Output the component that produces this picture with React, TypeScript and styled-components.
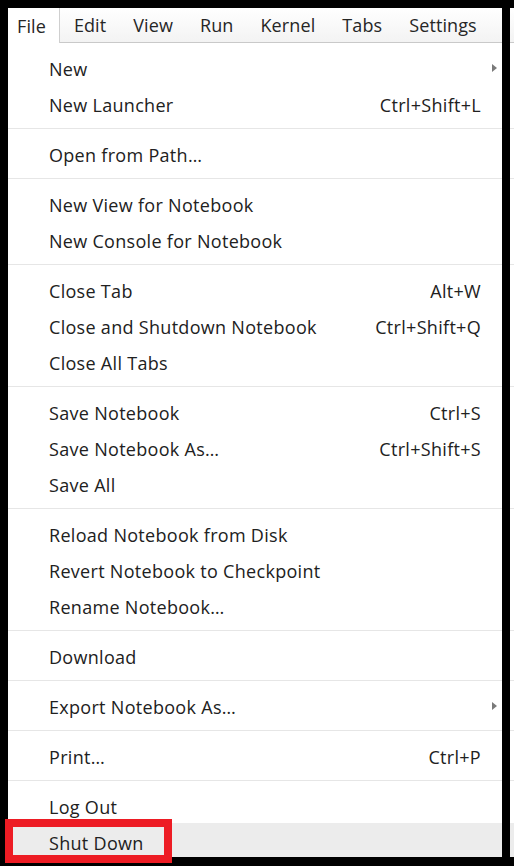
import styled, { createGlobalStyle } from 'styled-components';

const GlobalStyle = createGlobalStyle`
  html, body {
    margin: 0;
    padding: 0;
    background: #000;
  }
  * {
    box-sizing: border-box;
  }
`;

const Screen = styled.div`
  position: relative;
  width: 514px;
  height: 866px;
  background: #000;
  overflow: hidden;
  font-family: 'Open Sans', 'Noto Sans', sans-serif;
  color: #212121;
`;

const AppWindow = styled.div`
  margin: 8px 0 0 8px;
  width: 506px;
  height: 849px;
  background: #fff;
  overflow: hidden;
  display: flex;
  flex-direction: column;
`;

const MenuBar = styled.div`
  height: 35px;
  flex-shrink: 0;
  display: flex;
  align-items: stretch;
  background: linear-gradient(#ffffff, #f3f3f3);
  border-bottom: 1px solid #c9c9c9;
  box-shadow: 0 1px 2px rgba(0, 0, 0, 0.08);
`;

const BarItem = styled.div<{ $active?: boolean }>`
  display: flex;
  align-items: center;
  padding: 0 13.5px;
  font-size: 18px;
  letter-spacing: 0.1px;
  color: #262626;
  background: ${(p) => (p.$active ? '#fff' : 'transparent')};
  border-right: ${(p) => (p.$active ? '1px solid #cfcfcf' : 'none')};
  margin-bottom: ${(p) => (p.$active ? '-1px' : '0')};

  &:first-child {
    padding-left: 9px;
  }
`;

const Dropdown = styled.div`
  flex: 1;
  padding-top: 6px;
  background: #fff;
`;

const Row = styled.div<{ $hover?: boolean }>`
  height: 36px;
  display: flex;
  align-items: center;
  padding: 3px 33px 0 41px;
  font-size: 18px;
  letter-spacing: 0.3px;
  background: ${(p) => (p.$hover ? '#ececec' : 'transparent')};
  position: relative;
`;

const Label = styled.span`
  flex: 1;
  white-space: nowrap;
`;

const Shortcut = styled.span`
  white-space: nowrap;
`;

const SubArrow = styled.span`
  position: absolute;
  right: 17px;
  top: 50%;
  margin-top: -3px;
  width: 0;
  height: 0;
  border-top: 4px solid transparent;
  border-bottom: 4px solid transparent;
  border-left: 5px solid #7a7a7a;
`;

const Separator = styled.div`
  height: 14px;
  padding-top: 7px;

  &::after {
    content: '';
    display: block;
    height: 1px;
    background: #e6e6e6;
  }
`;

const FrameRight = styled.div`
  position: absolute;
  top: 0;
  left: 502px;
  width: 8px;
  height: 100%;
  background: #000;
`;

const Callout = styled.div`
  position: absolute;
  left: 5px;
  top: 819px;
  width: 167px;
  height: 44px;
  border: 8px solid #ed1c24;
`;

type Item = { label: string; shortcut?: string; submenu?: boolean; hover?: boolean } | 'sep';

const items: Item[] = [
  { label: 'New', submenu: true },
  { label: 'New Launcher', shortcut: 'Ctrl+Shift+L' },
  'sep',
  { label: 'Open from Path…' },
  'sep',
  { label: 'New View for Notebook' },
  { label: 'New Console for Notebook' },
  'sep',
  { label: 'Close Tab', shortcut: 'Alt+W' },
  { label: 'Close and Shutdown Notebook', shortcut: 'Ctrl+Shift+Q' },
  { label: 'Close All Tabs' },
  'sep',
  { label: 'Save Notebook', shortcut: 'Ctrl+S' },
  { label: 'Save Notebook As…', shortcut: 'Ctrl+Shift+S' },
  { label: 'Save All' },
  'sep',
  { label: 'Reload Notebook from Disk' },
  { label: 'Revert Notebook to Checkpoint' },
  { label: 'Rename Notebook…' },
  'sep',
  { label: 'Download' },
  'sep',
  { label: 'Export Notebook As…', submenu: true },
  'sep',
  { label: 'Print…', shortcut: 'Ctrl+P' },
  'sep',
  { label: 'Log Out' },
  { label: 'Shut Down', hover: true },
];

const barItems = ['File', 'Edit', 'View', 'Run', 'Kernel', 'Tabs', 'Settings'];

export default function App() {
  return (
    <>
      <GlobalStyle />
      <Screen>
        <AppWindow>
          <MenuBar>
            {barItems.map((name, i) => (
              <BarItem key={name} $active={i === 0}>
                {name}
              </BarItem>
            ))}
          </MenuBar>
          <Dropdown>
            {items.map((it, i) =>
              it === 'sep' ? (
                <Separator key={i} />
              ) : (
                <Row key={i} $hover={it.hover}>
                  <Label>{it.label}</Label>
                  {it.shortcut && <Shortcut>{it.shortcut}</Shortcut>}
                  {it.submenu && <SubArrow />}
                </Row>
              )
            )}
          </Dropdown>
        </AppWindow>
        <FrameRight />
        <Callout />
      </Screen>
    </>
  );
}
